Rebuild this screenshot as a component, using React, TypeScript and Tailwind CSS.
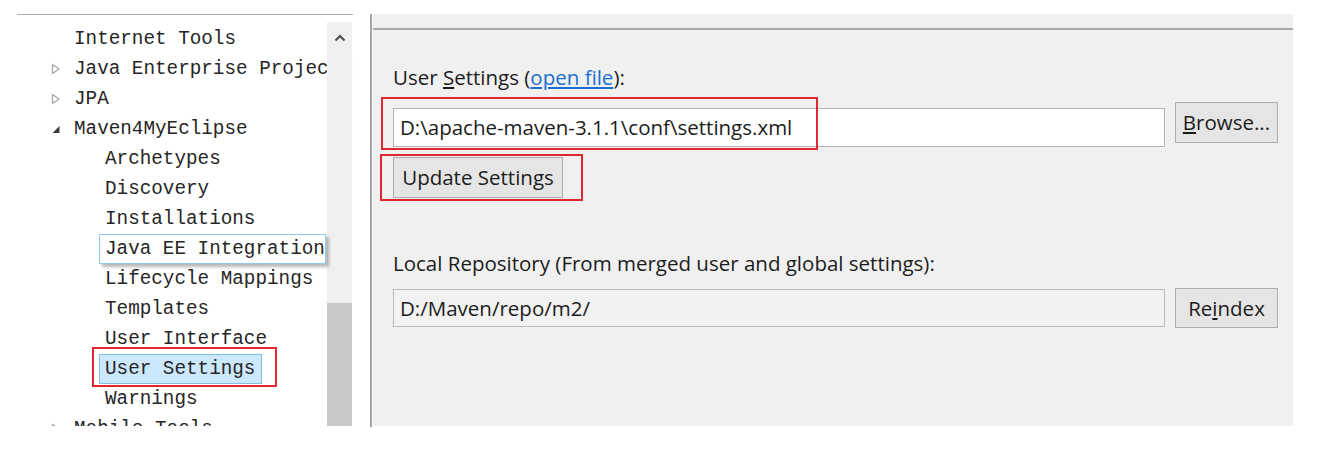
import React from 'react';

type Node = { label: string; level: 1 | 2; arrow?: 'closed' | 'open'; state?: 'hover' | 'selected' };

const nodes: Node[] = [
  { label: 'Internet Tools', level: 1 },
  { label: 'Java Enterprise Project Facets', level: 1, arrow: 'closed' },
  { label: 'JPA', level: 1, arrow: 'closed' },
  { label: 'Maven4MyEclipse', level: 1, arrow: 'open' },
  { label: 'Archetypes', level: 2 },
  { label: 'Discovery', level: 2 },
  { label: 'Installations', level: 2 },
  { label: 'Java EE Integration', level: 2, state: 'hover' },
  { label: 'Lifecycle Mappings', level: 2 },
  { label: 'Templates', level: 2 },
  { label: 'User Interface', level: 2 },
  { label: 'User Settings', level: 2, state: 'selected' },
  { label: 'Warnings', level: 2 },
  { label: 'Mobile Tools', level: 1, arrow: 'closed' },
];

function Arrow({ kind }: { kind?: 'closed' | 'open' }) {
  if (kind === 'closed') {
    return (
      <svg width="10" height="12" viewBox="0 0 10 12" className="shrink-0">
        <path d="M1.5 1.5 L8 6 L1.5 10.5 Z" fill="none" stroke="#a8a8a8" strokeWidth="1.3" strokeLinejoin="round" />
      </svg>
    );
  }
  if (kind === 'open') {
    return (
      <svg width="10" height="12" viewBox="0 0 10 12" className="shrink-0">
        <path d="M8.5 3 L8.5 10 L1.5 10 Z" fill="#3c3c3c" />
      </svg>
    );
  }
  return <span className="w-[10px] shrink-0" />;
}

function TreeRow({ node }: { node: Node }) {
  // the hover label pops out over the scrollbar, like the native tooltip-style hot item
  const box =
    node.state === 'hover'
      ? 'relative z-30 border border-[#8fcbea] bg-white shadow-[3px_3px_3px_rgba(0,0,0,0.28)] pr-0'
      : node.state === 'selected'
        ? 'border border-[#7fbfe6] bg-[#cce8ff] pr-[6px]'
        : 'border border-transparent pr-[6px]';
  return (
    <div className={`flex h-[30px] items-center ${node.level === 1 ? 'pl-[34px]' : 'pl-[82px]'}`}>
      {node.level === 1 && <Arrow kind={node.arrow} />}
      <span
        className={`whitespace-nowrap pl-[5px] leading-[28px] ${box} ${node.level === 1 ? 'ml-[7px]' : ''}`}
      >
        {node.label}
      </span>
    </div>
  );
}

function WinButton({ children, className = '' }: { children: React.ReactNode; className?: string }) {
  return (
    <button className={`flex items-center justify-center border border-[#adadad] bg-[#e5e5e5] text-[#1c1c1c] ${className}`}>
      {children}
    </button>
  );
}

export default function App() {
  return (
    <div className="relative flex h-[454px] w-[1324px] overflow-hidden bg-white pt-[14px]">
      {/* Preference tree */}
      <div
        className="ml-[17px] flex h-[412px] w-[336px] overflow-hidden border-t border-[#a9a9a9] text-[19.3px] text-[#262626]"
        style={{ fontFamily: '"Courier New", "Liberation Mono", monospace' }}
      >
        <div className="w-[310px] shrink-0 pt-[9px]">
          {nodes.map((n) => (
            <TreeRow key={n.label} node={n} />
          ))}
        </div>
        <div className="relative z-20 mr-[1px] flex w-[25px] shrink-0 flex-col bg-white pt-[7px]">
          <div className="flex flex-1 flex-col bg-[#f0f0f0]">
            <div className="flex h-[32px] items-center justify-center">
              <svg width="12" height="8" viewBox="0 0 12 8">
                <path d="M1.5 6.5 L6 2 L10.5 6.5" fill="none" stroke="#505050" strokeWidth="2.2" />
              </svg>
            </div>
            <div className="flex-1" />
            <div className="h-[123px] bg-[#c8c8c8]" />
          </div>
        </div>
        <div className="relative z-20 w-[1px] bg-white" />
      </div>

      {/* Splitter */}
      <div className="ml-[17px] h-[413px] w-[2px] bg-[#a4a4a4]" />

      {/* Maven user settings page */}
      <div
        className="ml-[1px] flex h-[412px] w-[920px] flex-col bg-[#f0f0f0] text-[20.5px] text-[#1c1c1c]"
        style={{ fontFamily: '"Open Sans", "Noto Sans", sans-serif' }}
      >
        <div className="mt-[14px] border-t-2 border-[#a8a8a8]" />
        <div className="flex flex-col pr-[15px] pl-[20px]">
          <div className="mt-[34px] leading-[26px]">
            User <span className="underline">S</span>ettings (
            <span className="text-[#1a6fd1] underline">open file</span>):
          </div>
          <div className="mt-[12px] flex items-start gap-[10px]">
            <div className="mt-[6px] flex h-[39px] flex-1 items-center border border-[#b4b4b4] bg-white px-[6px]">
              D:\apache-maven-3.1.1\conf\settings.xml
            </div>
            <WinButton className="h-[41px] w-[103px]">
              <span>
                <span className="underline">B</span>rowse...
              </span>
            </WinButton>
          </div>
          <WinButton className="mt-[10px] h-[41px] w-[170px] self-start">Update Settings</WinButton>
          <div className="mt-[52px] leading-[26px]">Local Repository (From merged user and global settings):</div>
          <div className="mt-[12px] flex items-start gap-[10px]">
            <div className="mt-[1px] flex h-[38px] flex-1 items-center border border-[#bcbcbc] bg-[#f2f2f2] px-[6px]">
              D:/Maven/repo/m2/
            </div>
            <WinButton className="h-[40px] w-[103px]">
              <span>
                Re<span className="underline">i</span>ndex
              </span>
            </WinButton>
          </div>
        </div>
      </div>

      {/* Red annotation boxes */}
      <div className="pointer-events-none absolute top-[347px] left-[92px] h-[40px] w-[185px] border-2 border-[#e0282e]" />
      <div className="pointer-events-none absolute top-[97px] left-[381px] h-[53px] w-[437px] border-2 border-[#e0282e]" />
      <div className="pointer-events-none absolute top-[154px] left-[380px] h-[47px] w-[203px] border-2 border-[#e0282e]" />
    </div>
  );
}
